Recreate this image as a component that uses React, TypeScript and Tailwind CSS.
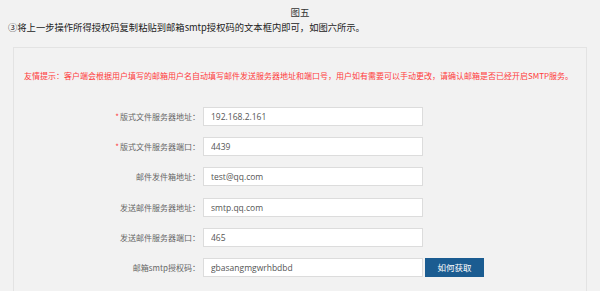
const rows = [
  { label: "版式文件服务器地址：", value: "192.168.2.161", required: true },
  { label: "版式文件服务器端口：", value: "4439", required: true },
  { label: "邮件发件箱地址：", value: "test@qq.com" },
  { label: "发送邮件服务器地址：", value: "smtp.qq.com" },
  { label: "发送邮件服务器端口：", value: "465" },
  { label: "邮箱smtp授权码：", value: "gbasangmgwrhbdbd", button: "如何获取" },
];

function FormRow({ label, value, required, button }: { label: string; value: string; required?: boolean; button?: string }) {
  return (
    <div className="flex h-[19px] items-center">
      <label className="w-[186px] shrink-0 text-right text-[8px] leading-[19px] text-[#666]">
        {required && <span className="mr-[1px] text-[#ff3b3b]">*</span>}
        {label}
      </label>
      <input
        readOnly
        value={value}
        className="ml-[3px] h-[19px] w-[220px] border border-[#dcdcdc] bg-white px-[7px] font-['Open_Sans','Noto_Sans_CJK_SC',sans-serif] text-[8.5px] text-[#555] outline-none"
      />
      {button && (
        <button className="ml-[2px] h-[19px] w-[59px] bg-[#1b5c91] text-[8.5px] text-white">
          {button}
        </button>
      )}
    </div>
  );
}

export default function App() {
  return (
    <div className="h-[291px] w-[600px] overflow-hidden bg-[#f2f2f2] font-['Noto_Sans_CJK_SC',sans-serif]">
      <p className="pt-[5px] text-center text-[9.5px] leading-[14px] text-[#333]">图五</p>
      <p className="pl-[8px] pt-[1px] text-[9.3px] leading-[15px] text-[#222]">
        ③将上一步操作所得授权码复制粘贴到邮箱smtp授权码的文本框内即可，如图六所示。
      </p>

      <div className="mx-[13px] mt-[12px] h-[260px] border border-[#e3e3e3] bg-[#f2f2f2]">
        <p className="pl-[10px] pt-[22px] text-[8px] leading-[12px] text-[#ff3b3b]">
          友情提示：客户端会根据用户填写的邮箱用户名自动填写邮件发送服务器地址和端口号，用户如有需要可以手动更改，请确认邮箱是否已经开启SMTP服务。
        </p>

        <div className="mt-[25px] flex flex-col gap-[11.2px]">
          {rows.map((r) => (
            <FormRow key={r.label} {...r} />
          ))}
        </div>
      </div>
    </div>
  );
}
